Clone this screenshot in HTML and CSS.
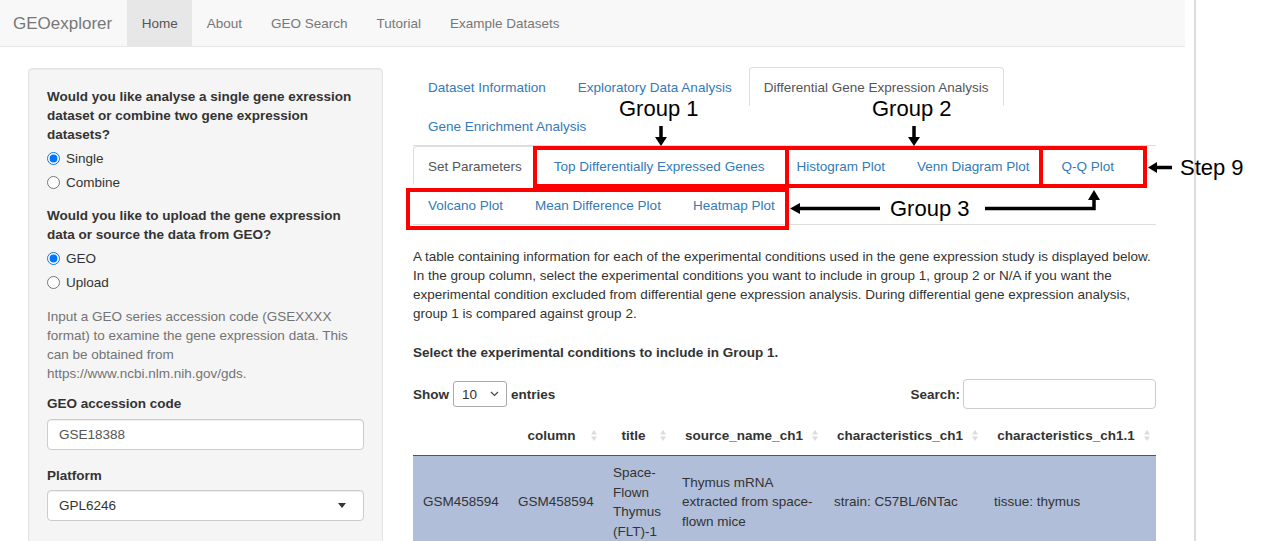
FILE: index.html
```html
<!DOCTYPE html>
<html lang="en">
<head>
<meta charset="utf-8">
<title>GEOexplorer</title>
<link rel="stylesheet" href="styles.css">
</head>
<body>
<div class="app">
  <div class="page">
    <nav class="navbar">
      <span class="brand">GEOexplorer</span>
      <div class="nav">
        <a class="active" href="#">Home</a>
        <a href="#">About</a>
        <a href="#">GEO Search</a>
        <a href="#">Tutorial</a>
        <a href="#">Example Datasets</a>
      </div>
    </nav>

    <div class="content">
      <aside class="sidebar">
        <div class="well">
          <div class="q">Would you like analyse a single gene exression dataset or combine two gene expression datasets?</div>
          <div class="radios">
            <label class="radio"><input type="radio" name="mode" checked> Single</label>
            <label class="radio"><input type="radio" name="mode"> Combine</label>
          </div>
          <div class="q q2">Would you like to upload the gene expression data or source the data from GEO?</div>
          <div class="radios">
            <label class="radio"><input type="radio" name="src" checked> GEO</label>
            <label class="radio"><input type="radio" name="src"> Upload</label>
          </div>
          <p class="help">Input a GEO series accession code (GSEXXXX format) to examine the gene expression data. This can be obtained from https://www.ncbi.nlm.nih.gov/gds.</p>
          <div class="flabel">GEO accession code</div>
          <div class="input">GSE18388</div>
          <div class="flabel flabel2">Platform</div>
          <div class="input select"><span>GPL6246</span><span class="caret"></span></div>
        </div>
      </aside>

      <main class="main">
        <ul class="tabs">
          <li><a href="#">Dataset Information</a></li>
          <li><a href="#">Exploratory Data Analysis</a></li>
          <li><a class="active" href="#">Differential Gene Expression Analysis</a></li>
          <li><a href="#">Gene Enrichment Analysis</a></li>
        </ul>
        <ul class="tabs">
          <li><a class="active" href="#">Set Parameters</a></li>
          <li><a href="#">Top Differentially Expressed Genes</a></li>
          <li><a href="#">Histogram Plot</a></li>
          <li><a href="#">Venn Diagram Plot</a></li>
          <li><a href="#">Q-Q Plot</a></li>
          <li><a href="#">Volcano Plot</a></li>
          <li><a href="#">Mean Difference Plot</a></li>
          <li><a href="#">Heatmap Plot</a></li>
        </ul>
        <div class="pane">
          <p class="intro">A table containing information for each of the experimental conditions used in the gene expression study is displayed below. In the group column, select the experimental conditions you want to include in group 1, group 2 or N/A if you want the experimental condition excluded from differential gene expression analysis. During differential gene expression analysis, group 1 is compared against group 2.</p>
          <p class="sel">Select the experimental conditions to include in Group 1.</p>
          <div class="dt-controls">
            <div class="len">Show <span class="len-select"><span>10</span><svg width="9" height="6" viewBox="0 0 9 6"><path d="M1 1 L4.5 4.5 L8 1" fill="none" stroke="#444" stroke-width="1.2"/></svg></span> entries</div>
            <div class="search">Search: <span class="search-input"></span></div>
          </div>
          <table class="dt">
            <colgroup>
              <col class="c1"><col class="c2"><col class="c3"><col class="c4"><col class="c5"><col class="c6">
            </colgroup>
            <thead>
              <tr>
                <th class="blank"></th>
                <th>column<svg class="sort" width="6" height="11" viewBox="0 0 6 11"><path d="M0 4.5 L3 0 L6 4.5Z M0 6.5 L3 11 L6 6.5Z" fill="#dcdcdc"/></svg></th>
                <th>title<svg class="sort" width="6" height="11" viewBox="0 0 6 11"><path d="M0 4.5 L3 0 L6 4.5Z M0 6.5 L3 11 L6 6.5Z" fill="#dcdcdc"/></svg></th>
                <th>source_name_ch1<svg class="sort" width="6" height="11" viewBox="0 0 6 11"><path d="M0 4.5 L3 0 L6 4.5Z M0 6.5 L3 11 L6 6.5Z" fill="#dcdcdc"/></svg></th>
                <th>characteristics_ch1<svg class="sort" width="6" height="11" viewBox="0 0 6 11"><path d="M0 4.5 L3 0 L6 4.5Z M0 6.5 L3 11 L6 6.5Z" fill="#dcdcdc"/></svg></th>
                <th>characteristics_ch1.1<svg class="sort" width="6" height="11" viewBox="0 0 6 11"><path d="M0 4.5 L3 0 L6 4.5Z M0 6.5 L3 11 L6 6.5Z" fill="#dcdcdc"/></svg></th>
              </tr>
            </thead>
            <tbody>
              <tr class="selected">
                <td>GSM458594</td>
                <td>GSM458594</td>
                <td>Space-Flown Thymus (FLT)-1</td>
                <td>Thymus mRNA extracted from space-flown mice</td>
                <td>strain: C57BL/6NTac</td>
                <td>tissue: thymus</td>
              </tr>
            </tbody>
          </table>
        </div>
      </main>
    </div>

    <div class="box b1"></div>
    <div class="box b2"></div>
    <div class="box b3"></div>
    <div class="box b4"></div>
    <div class="note n1">Group 1</div>
    <div class="note n2">Group 2</div>
    <div class="note n3">Step 9</div>
    <div class="note n4">Group 3</div>
    <svg class="arrows" width="1185" height="541" viewBox="0 0 1185 541">
      <g stroke="#000" stroke-width="3.5" fill="none">
        <line x1="661" y1="126" x2="661" y2="139"/>
        <line x1="914" y1="126" x2="914" y2="139"/>
        <line x1="1172" y1="167.5" x2="1155" y2="167.5"/>
        <line x1="880" y1="208.5" x2="798" y2="208.5"/>
        <polyline points="985,208.5 1094,208.5 1094,198"/>
      </g>
      <g fill="#000">
        <polygon points="655,137 667,137 661,146"/>
        <polygon points="908,137 920,137 914,146"/>
        <polygon points="1157,162 1157,173 1148,167.5"/>
        <polygon points="800,203 800,214 790,208.5"/>
        <polygon points="1088,200 1100,200 1094,190"/>
      </g>
    </svg>
  </div>
  <div class="gutter"></div>
</div>
</body>
</html>
```

FILE: styles.css
```css
html, body {
  margin: 0;
  padding: 0;
  overflow: hidden;
}
body {
  font-family: "Liberation Sans", Arial, sans-serif;
  font-size: 13.5px;
  line-height: 19px;
  color: #333;
  background: #fff;
}
.app {
  display: flex;
  height: 541px;
  overflow: hidden;
}
.page {
  position: relative;
  width: 1185px;
  flex: none;
}
.gutter {
  margin-left: 9px;
  border-left: 2px solid #dcdcdc;
  flex: 1;
}

/* navbar */
.navbar {
  height: 46px;
  background: #f8f8f8;
  border-bottom: 1px solid #e7e7e7;
  display: flex;
}
.brand {
  display: flex;
  align-items: center;
  padding: 0 15px 0 13px;
  font-size: 17px;
  color: #777;
}
.nav {
  display: flex;
}
.nav a {
  display: flex;
  align-items: center;
  padding: 0 14.5px;
  color: #777;
  text-decoration: none;
}
.nav a.active {
  background: #e7e7e7;
  color: #555;
}

/* layout */
.content {
  display: flex;
  padding-top: 20px;
}
.sidebar {
  margin-left: 28px;
  margin-top: 1px;
  width: 355px;
  flex: none;
}
.main {
  margin-left: 30px;
  width: 743px;
  flex: none;
}

/* sidebar */
.well {
  background: #f5f5f5;
  border: 1px solid #e3e3e3;
  border-radius: 4px;
  box-shadow: inset 0 1px 1px rgba(0,0,0,.05);
  padding: 18px 18px 40px;
  min-height: 500px;
}
.q {
  font-weight: bold;
}
.q2 {
  margin-top: 12px;
}
.radios {
  margin-top: 2px;
}
.radio {
  display: flex;
  align-items: center;
  height: 24px;
}
.radio input {
  width: 13px;
  height: 13px;
  margin: 0 6px 0 0;
}
.help {
  margin: 13px 0 0;
  color: #737373;
}
.flabel {
  margin-top: 11px;
  font-weight: bold;
}
.flabel2 {
  margin-top: 16px;
}
.input {
  margin-top: 6px;
  height: 31px;
  box-sizing: border-box;
  border: 1px solid #ccc;
  border-radius: 4px;
  background: #fff;
  padding: 0 11px;
  display: flex;
  align-items: center;
  color: #555;
  box-shadow: inset 0 1px 1px rgba(0,0,0,.075);
}
.select {
  margin-top: 5px;
  justify-content: space-between;
  color: #333;
  padding-right: 17px;
}
.caret {
  width: 0;
  height: 0;
  border-left: 4.5px solid transparent;
  border-right: 4.5px solid transparent;
  border-top: 5px solid #333;
}

/* tabs */
.tabs {
  list-style: none;
  margin: 0;
  padding: 0;
  display: flex;
  flex-wrap: wrap;
  border-bottom: 1px solid #ddd;
}
.tabs a {
  display: block;
  padding: 10px 14px 8px;
  line-height: 19px;
  border: 1px solid transparent;
  border-radius: 4px 4px 0 0;
  margin-right: 2px;
  color: #337ab7;
  text-decoration: none;
}
.tabs a.active {
  color: #555;
  background: #fff;
  border-color: #ddd;
  border-bottom-color: transparent;
}

/* pane */
.intro {
  margin: 22px 0 0;
}
.sel {
  margin: 20px 0 0;
  font-weight: bold;
}
.dt-controls {
  margin-top: 17px;
  height: 30px;
  display: flex;
  justify-content: space-between;
  align-items: center;
  font-weight: bold;
}
.len, .search {
  display: flex;
  align-items: center;
}
.len-select {
  display: inline-flex;
  align-items: center;
  justify-content: space-between;
  box-sizing: border-box;
  width: 54px;
  height: 26px;
  margin: 0 4px 0 4px;
  padding: 0 7px 0 8px;
  border: 1px solid #aaa;
  border-radius: 3px;
  font-weight: normal;
  color: #333;
  background: #fff;
}
.search-input {
  display: inline-block;
  box-sizing: border-box;
  width: 193px;
  height: 30px;
  margin-left: 3px;
  border: 1px solid #ccc;
  border-radius: 4px;
  background: #fff;
}

/* table */
.dt {
  margin-top: 7px;
  width: 743px;
  table-layout: fixed;
  border-collapse: collapse;
}
.c1 { width: 95px; }
.c2 { width: 95px; }
.c3 { width: 69px; }
.c4 { width: 152px; }
.c5 { width: 160px; }
.c6 { width: 172px; }
.dt th {
  position: relative;
  padding: 10px 18px 10px 10px;
  text-align: center;
  font-weight: bold;
  border-bottom: 1px solid #555;
  white-space: nowrap;
}
.sort {
  position: absolute;
  right: 6px;
  top: 14px;
}
.dt td {
  padding: 7px 10px;
  vertical-align: middle;
  line-height: 19.5px;
}
.dt tr.selected td {
  background: #b0bed9;
}

/* annotations */
.box {
  position: absolute;
  box-sizing: border-box;
  border: 4px solid #ff0000;
}
.b1 { left: 533px; top: 146px; width: 256px; height: 42px; }
.b2 { left: 785px; top: 146px; width: 258px; height: 42px; }
.b3 { left: 1039px; top: 146px; width: 108px; height: 42px; }
.b4 { left: 406px; top: 188px; width: 383px; height: 42px; }
.note {
  position: absolute;
  font-size: 22px;
  line-height: 26px;
  color: #000;
  white-space: nowrap;
}
.n1 { left: 619px; top: 96px; }
.n2 { left: 872px; top: 96px; }
.n3 { left: 1180px; top: 155px; }
.n4 { left: 890px; top: 196px; }
.arrows {
  position: absolute;
  left: 0;
  top: 0;
  pointer-events: none;
}
```
